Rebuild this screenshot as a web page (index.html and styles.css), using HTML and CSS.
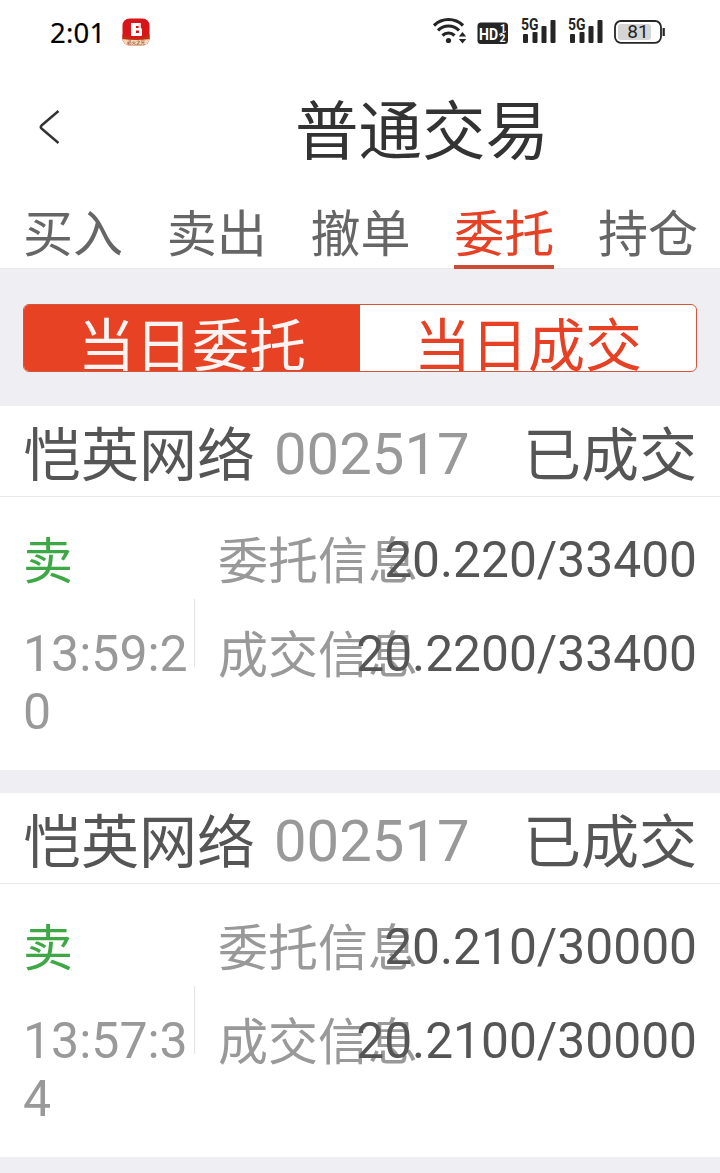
FILE: index.html
```html
<!DOCTYPE html>
<html lang="zh-CN">
<head>
<meta charset="utf-8">
<title>普通交易</title>
<link rel="stylesheet" href="styles.css">
</head>
<body>
<header class="status">
  <div class="status-left">
    <span class="clock">2:01</span>
    <svg class="app-icon" width="28" height="28" viewBox="0 0 28 28">
      <defs><clipPath id="app"><rect x="0.5" y="0.5" width="27" height="27" rx="7"/></clipPath></defs>
      <g clip-path="url(#app)">
        <rect width="28" height="28" fill="#d81518"/>
        <path d="M0 16L9 20H19L28 16V24H0Z" fill="#c52a13"/>
        <path d="M0 21Q14 23 28 21V28H0Z" fill="#f8d8b4"/>
        <rect x="9" y="5" width="5" height="13" fill="#fff"/>
        <rect x="9" y="5" width="10" height="3" rx="1" fill="#fff"/>
        <rect x="16.500" y="6" width="2.500" height="4.500" fill="#f9cfcc"/>
        <rect x="12" y="10" width="7.500" height="2.500" fill="#fff"/>
        <rect x="17" y="11.500" width="3" height="5" fill="#fff"/>
        <rect x="12" y="15" width="8" height="3" rx="1" fill="#fff"/>
      </g>
      <text class="app-label" x="14" y="26" text-anchor="middle">必火之光</text>
    </svg>
  </div>
  <svg class="status-right" width="234" height="32" viewBox="0 0 234 32">
    <g fill="none" stroke="#252525" stroke-width="3.200">
      <path d="M1 10.500A20.500 20.500 0 0 1 30 10.500"/>
      <path d="M5 15.500A14.500 14.500 0 0 1 26 15.500"/>
      <path d="M9.500 20.500A8.500 8.500 0 0 1 21.500 20.500"/>
    </g>
    <circle cx="15.500" cy="25.500" r="2.600" fill="#252525"/>
    <path d="M25.800 21.500L29.500 17L33.200 21.500ZM25.800 24H33.200L29.500 28.500Z" fill="#252525"/>
    <rect x="44.500" y="7.500" width="30.500" height="21.500" rx="3.500" fill="#252525"/>
    <text class="hd" x="46" y="24.500" textLength="19" lengthAdjust="spacingAndGlyphs">HD</text>
    <text class="hd-num" x="67" y="16.500">1</text>
    <text class="hd-num" x="66.500" y="26.500">2</text>
    <path d="M66 19.500L73 16.500" stroke="#fff" stroke-width="1"/>
    <g id="sig" fill="#252525">
      <text class="gen" x="88" y="15" textLength="17.500" lengthAdjust="spacingAndGlyphs">5G</text>
      <rect x="90" y="19" width="5" height="9" rx="1"/>
      <rect x="99.500" y="17" width="5" height="11" rx="1"/>
      <rect x="108.500" y="11" width="5" height="17" rx="1"/>
      <rect x="117.500" y="5" width="5" height="23" rx="1"/>
    </g>
    <use href="#sig" x="47"/>
    <rect x="182" y="6" width="46" height="21.800" rx="6" fill="#fff" stroke="#252525" stroke-width="1.800"/>
    <rect x="185" y="9" width="33" height="16" rx="3" fill="#d5d5d5"/>
    <path d="M230.700 13V21" stroke="#252525" stroke-width="2.200"/>
    <text class="level" x="205" y="23" text-anchor="middle">81</text>
  </svg>
</header>

<nav class="titlebar">
  <svg class="back" width="24" height="38" viewBox="0 0 24 38">
    <path d="M20.500 3L3.500 17.500Q2 19 3.500 20.500L20.500 35" fill="none" stroke="#333" stroke-width="2.400"/>
  </svg>
  <h1 class="title">普通交易</h1>
</nav>

<nav class="tabs">
  <span class="tab">买入</span>
  <span class="tab">卖出</span>
  <span class="tab">撤单</span>
  <span class="tab active">委托</span>
  <span class="tab">持仓</span>
</nav>

<main class="content">
  <div class="segment">
    <span class="seg selected">当日委托</span>
    <span class="seg">当日成交</span>
  </div>

  <section class="card">
    <div class="card-head">
      <span class="name">恺英网络</span>
      <span class="code">002517</span>
      <span class="state">已成交</span>
    </div>
    <div class="card-body">
      <div class="when">
        <span class="side">卖</span>
        <span class="time">13:59:20</span>
      </div>
      <div class="divider"></div>
      <div class="info">
        <div class="row"><span class="label">委托信息</span><span class="value">20.220/33400</span></div>
        <div class="row"><span class="label">成交信息</span><span class="value">20.2200/33400</span></div>
      </div>
    </div>
  </section>

  <section class="card">
    <div class="card-head">
      <span class="name">恺英网络</span>
      <span class="code">002517</span>
      <span class="state">已成交</span>
    </div>
    <div class="card-body">
      <div class="when">
        <span class="side">卖</span>
        <span class="time">13:57:34</span>
      </div>
      <div class="divider"></div>
      <div class="info">
        <div class="row"><span class="label">委托信息</span><span class="value">20.210/30000</span></div>
        <div class="row"><span class="label">成交信息</span><span class="value">20.2100/30000</span></div>
      </div>
    </div>
  </section>
</main>
</body>
</html>
```
FILE: styles.css
```css
* { box-sizing: border-box; }

body {
  margin: 0;
  height: 1173px;
  overflow: hidden;
  background: #efeef3;
  color: #555;
  font-family: Roboto, "Noto Sans CJK SC", sans-serif;
}

svg { display: block; flex: none; }

.status {
  display: flex;
  justify-content: space-between;
  align-items: flex-start;
  height: 70px;
  padding: 15px 53px 0 50px;
  background: #fff;
}

.status-left { display: flex; gap: 17px; padding-top: 3px; }

.clock {
  width: 55px;
  font: 400 27.5px/30px "Noto Sans", sans-serif;
  letter-spacing: 0.2px;
  -webkit-text-stroke: 0.2px #000;
  color: #000;
}

.app-label { font: 400 4.5px "Noto Sans CJK SC", sans-serif; fill: #6b3020; }
.hd { font: 700 17px Roboto, sans-serif; fill: #fff; }
.hd-num { font: 700 10.5px Roboto, sans-serif; fill: #fff; }
.gen { font: 700 16px Roboto, sans-serif; }
.level { font: 400 19px Roboto, sans-serif; fill: #222; }

.titlebar {
  display: flex;
  align-items: flex-start;
  height: 129px;
  padding: 38px 0 0 38px;
  background: #fff;
}

.title {
  margin: -12px 0 0 233px;
  font-size: 63.5px;
  font-weight: 400;
  line-height: 74px;
  color: #333;
}

.tabs {
  display: flex;
  justify-content: space-between;
  height: 70px;
  padding: 0 22px 0 23px;
  border-bottom: 1px solid #e9e9ec;
  background: #fff;
}

.tab {
  height: 70px;
  font-size: 50px;
  line-height: 72px;
  color: #666;
}

.active {
  border-bottom: 4px solid #cc4d33;
  color: #e64124;
}

.content { padding-top: 35px; }

.segment {
  display: flex;
  height: 68px;
  margin: 0 23px 34px;
  overflow: hidden;
  border: 1px solid #d2563d;
  border-radius: 6px;
  background: #fff;
}

.seg {
  flex: 1;
  padding-top: 3px;
  font-size: 57px;
  line-height: 78px;
  text-align: center;
  color: #e64124;
}

.selected { background: #e84224; color: #fbf4f3; }

.card {
  height: 364px;
  margin-bottom: 23px;
  background: #fff;
}

.card-head {
  display: flex;
  height: 91px;
  padding: 3px 23px 0;
  border-bottom: 1px solid #e8e8e8;
  font-size: 58px;
  line-height: 90px;
}

.name, .state { padding-top: 2px; }
.code { margin-left: 19px; color: #999; }
.state { margin-left: auto; }

.card-body {
  display: flex;
  padding: 34px 23px 0 23px;
  font-size: 50px;
  line-height: 58px;
}

.when {
  display: flex;
  flex-direction: column;
  gap: 36px;
  width: 171px;
}

.side { height: 58px; padding-top: 2px; color: #3da845; }
.time { color: #999; word-break: break-all; }

.divider {
  width: 1px;
  height: 68px;
  margin-top: 68px;
  background: #e4e4e4;
}

.info {
  display: flex;
  flex: 1;
  flex-direction: column;
  gap: 36px;
  padding-left: 23px;
}

/* Label and value share one cell, so long values run over the label. */
.row { display: grid; height: 58px; }
.label, .value { grid-area: 1 / 1; }
.label { padding-top: 2px; color: #999; }
.value { font-size: 49.7px; text-align: right; }
```
